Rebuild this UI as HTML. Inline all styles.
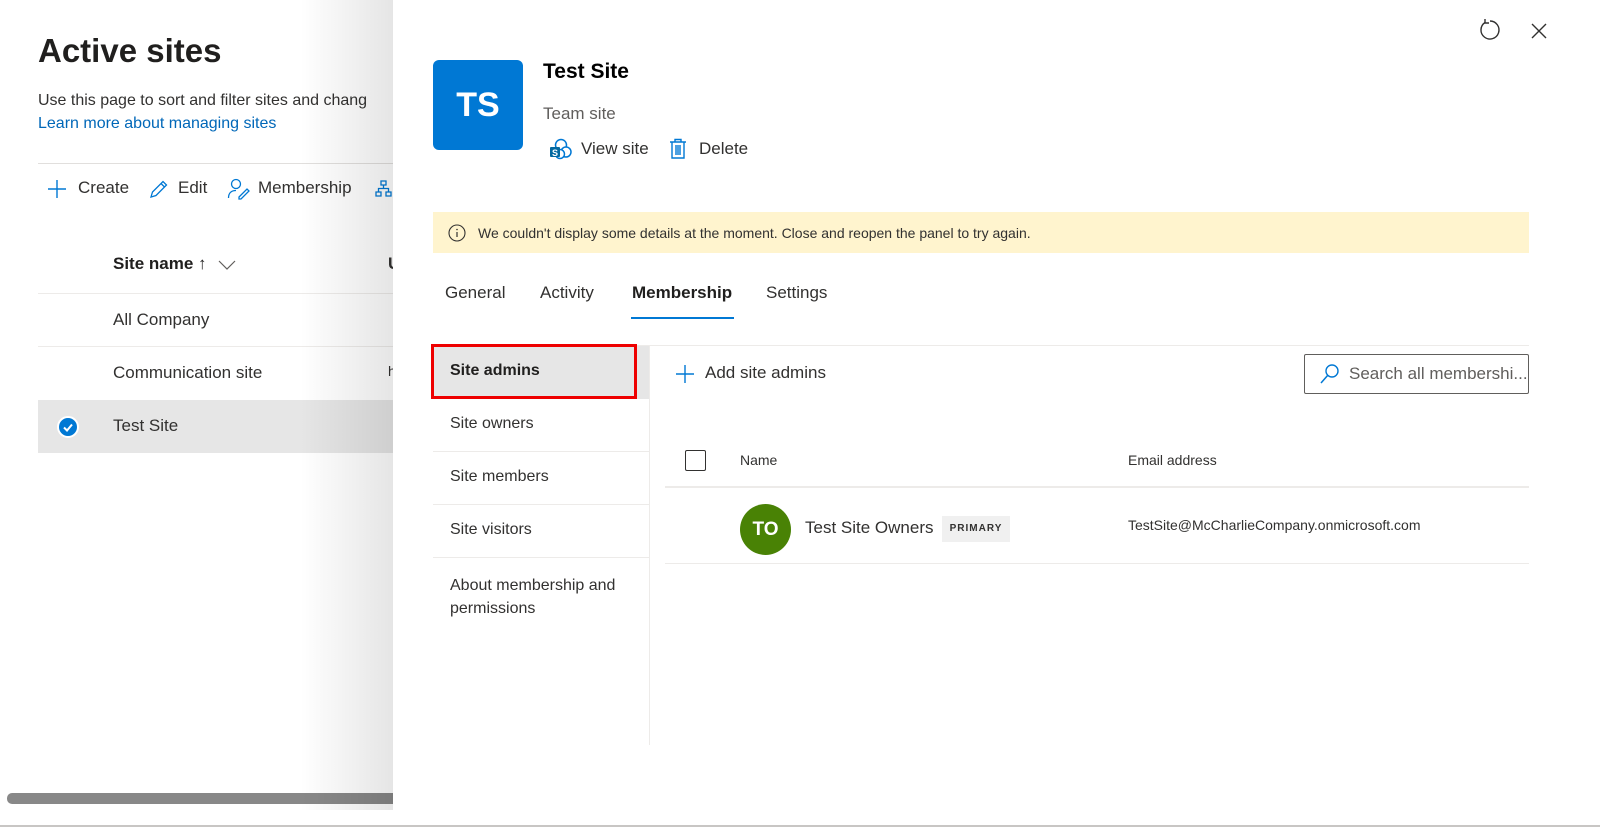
<!DOCTYPE html>
<html><head><meta charset="utf-8"><style>
*{box-sizing:border-box;margin:0;padding:0}
body{width:1600px;height:827px;overflow:hidden;background:#fff;font-family:"Segoe UI","Liberation Sans",sans-serif;color:#323130;position:relative}
.a{position:absolute;white-space:nowrap}
</style></head><body>
<!-- left page -->
<div class="a" style="left:38px;top:32px;font-size:33px;font-weight:700;color:#201f1e">Active sites</div>
<div class="a" style="left:38px;top:92px;font-size:16px">Use this page to sort and filter sites and chang</div>
<div class="a" style="left:38px;top:115px;font-size:16px;color:#0067b8">Learn more about managing sites</div>
<div class="a" style="left:38px;top:163px;width:360px;height:1px;background:#e1dfdd"></div>
<svg class="a" style="left:47px;top:179px" width="20" height="20"><path d="M10 1v18M1 10h18" stroke="#0078d4" stroke-width="1.4"/></svg>
<div class="a" style="left:78px;top:178px;font-size:17px">Create</div>
<svg class="a" style="left:148px;top:178px" width="22" height="22"><path d="M3 19l1.5-5L15 3.5l3.5 3.5L8 17.5z M13 5.5l3.5 3.5" stroke="#0078d4" stroke-width="1.3" fill="none"/></svg>
<div class="a" style="left:178px;top:178px;font-size:17px">Edit</div>
<svg class="a" style="left:227px;top:178px" width="24" height="22"><circle cx="9" cy="6" r="4.5" stroke="#0078d4" stroke-width="1.3" fill="none"/><path d="M1.5 20c0-5 3-7.5 7.5-7.5M12 19l8-8 2 2-8 8h-2z" stroke="#0078d4" stroke-width="1.3" fill="none"/></svg>
<div class="a" style="left:258px;top:178px;font-size:17px">Membership</div>
<svg class="a" style="left:375px;top:180px" width="18" height="18"><path d="M6 1h5v4H6zM1 12h5v4H1zM11 12h5v4h-5zM8.5 5v3.5M3.5 12V8.5h10V12" stroke="#0078d4" stroke-width="1.3" fill="none"/></svg>
<div class="a" style="left:113px;top:254px;font-size:17px;font-weight:600;color:#201f1e">Site name <span style="font-weight:400">↑</span></div>
<svg class="a" style="left:218px;top:259px" width="18" height="12"><path d="M1 2l8 8 8-8" stroke="#605e5c" stroke-width="1.2" fill="none"/></svg>
<div class="a" style="left:388px;top:254px;font-size:17px;font-weight:600">U</div>
<div class="a" style="left:38px;top:293px;width:360px;height:1px;background:#edebe9"></div>
<div class="a" style="left:113px;top:310px;font-size:17px">All Company</div>
<div class="a" style="left:38px;top:346px;width:360px;height:1px;background:#edebe9"></div>
<div class="a" style="left:113px;top:363px;font-size:17px">Communication site</div>
<div class="a" style="left:388px;top:363px;font-size:14px">h</div>
<div class="a" style="left:38px;top:400px;width:360px;height:53px;background:#e6e6e6"></div>
<div class="a" style="left:57px;top:416px;width:22px;height:22px;border-radius:50%;background:#0078d4;border:2px solid #fff"></div>
<svg class="a" style="left:61px;top:420px" width="14" height="14"><path d="M3 7.5l3 3 5-6" stroke="#fff" stroke-width="2" fill="none"/></svg>
<div class="a" style="left:113px;top:416px;font-size:17px">Test Site</div>
<div class="a" style="left:0;top:793px;width:400px;height:12px;background:#fff"></div>
<div class="a" style="left:7px;top:793px;width:400px;height:11px;background:#888;border-radius:5px"></div>
<!-- shadow -->
<div class="a" style="left:300px;top:0;width:93px;height:810px;background:linear-gradient(90deg,rgba(0,0,0,0),rgba(0,0,0,.10))"></div>
<!-- panel -->
<div class="a" style="left:393px;top:0;width:1207px;height:810px;background:#fff"></div>
<div class="a" style="left:0;top:825px;width:1600px;height:2px;background:#c8c6c4"></div>
<svg class="a" style="left:1478px;top:18px" width="24" height="24"><path d="M7 4.5A9 9 0 1 0 12 3" stroke="#323130" stroke-width="1.4" fill="none"/><path d="M7 1v4h4" stroke="#323130" stroke-width="1.4" fill="none"/></svg>
<svg class="a" style="left:1530px;top:22px" width="18" height="18"><path d="M2 2l14 14M16 2L2 16" stroke="#323130" stroke-width="1.4"/></svg>
<div class="a" style="left:433px;top:60px;width:90px;height:90px;background:#0078d4;border-radius:6px;color:#fff;font-size:34px;font-weight:600;text-align:center;line-height:90px">TS</div>
<div class="a" style="left:543px;top:60px;font-size:21px;font-weight:700;color:#000">Test Site</div>
<div class="a" style="left:543px;top:104px;font-size:17px;color:#605e5c">Team site</div>
<svg class="a" style="left:549px;top:138px" width="24" height="22"><circle cx="12" cy="7" r="5.5" stroke="#0078d4" stroke-width="1.5" fill="#fff"/><circle cx="17" cy="14" r="5" stroke="#0078d4" stroke-width="1.5" fill="#fff"/><circle cx="11" cy="16" r="4.5" stroke="#0078d4" stroke-width="1.5" fill="#fff"/><rect x="1" y="9" width="10" height="10" rx="1" fill="#0369a1"/><text x="3" y="18" font-size="9" fill="#fff" font-family="Liberation Sans" font-weight="700">S</text></svg>
<div class="a" style="left:581px;top:139px;font-size:17px">View site</div>
<svg class="a" style="left:668px;top:138px" width="20" height="22"><path d="M2 4h16M7 4V1.5h6V4M4 4v16h12V4M8 7v10M10 7v10M12 7v10" stroke="#0078d4" stroke-width="1.4" fill="none"/></svg>
<div class="a" style="left:699px;top:139px;font-size:17px">Delete</div>
<div class="a" style="left:433px;top:212px;width:1096px;height:41px;background:#fff4ce"></div>
<svg class="a" style="left:448px;top:224px" width="18" height="18"><circle cx="9" cy="9" r="8" stroke="#323130" stroke-width="1.1" fill="none"/><path d="M9 8v5" stroke="#323130" stroke-width="1.2"/><circle cx="9" cy="5.5" r=".8" fill="#323130"/></svg>
<div class="a" style="left:478px;top:225px;font-size:14px">We couldn't display some details at the moment. Close and reopen the panel to try again.</div>
<div class="a" style="left:445px;top:283px;font-size:17px">General</div>
<div class="a" style="left:540px;top:283px;font-size:17px">Activity</div>
<div class="a" style="left:632px;top:283px;font-size:17px;font-weight:600;color:#201f1e">Membership</div>
<div class="a" style="left:631px;top:317px;width:103px;height:2px;background:#0078d4"></div>
<div class="a" style="left:766px;top:283px;font-size:17px">Settings</div>
<div class="a" style="left:433px;top:345px;width:1096px;height:1px;background:#edebe9"></div>
<div class="a" style="left:649px;top:345px;width:1px;height:400px;background:#edebe9"></div>
<div class="a" style="left:433px;top:346px;width:216px;height:53px;background:#e6e6e6"></div>
<div class="a" style="left:431px;top:344px;width:206px;height:55px;border:3px solid #e00"></div>
<div class="a" style="left:450px;top:362px;font-size:16px;font-weight:600;color:#201f1e">Site admins</div>
<div class="a" style="left:450px;top:415px;font-size:16px">Site owners</div>
<div class="a" style="left:433px;top:451px;width:216px;height:1px;background:#edebe9"></div>
<div class="a" style="left:450px;top:468px;font-size:16px">Site members</div>
<div class="a" style="left:433px;top:504px;width:216px;height:1px;background:#edebe9"></div>
<div class="a" style="left:450px;top:521px;font-size:16px">Site visitors</div>
<div class="a" style="left:433px;top:557px;width:216px;height:1px;background:#edebe9"></div>
<div class="a" style="left:450px;top:574px;font-size:16px;line-height:23px">About membership and<br>permissions</div>
<svg class="a" style="left:675px;top:364px" width="20" height="20"><path d="M10 1v18M1 10h18" stroke="#0078d4" stroke-width="1.4"/></svg>
<div class="a" style="left:705px;top:363px;font-size:17px">Add site admins</div>
<div class="a" style="left:1304px;top:354px;width:225px;height:40px;border:1px solid #605e5c;border-radius:2px"></div>
<svg class="a" style="left:1319px;top:363px" width="22" height="22"><circle cx="13" cy="8" r="6" stroke="#0078d4" stroke-width="1.4" fill="none"/><path d="M9 12L2 20" stroke="#0078d4" stroke-width="1.5"/></svg>
<div class="a" style="left:1349px;top:364px;font-size:17px;color:#605e5c">Search all membershi...</div>
<div class="a" style="left:685px;top:450px;width:21px;height:21px;border:1px solid #323130;border-radius:2px"></div>
<div class="a" style="left:740px;top:452px;font-size:14px">Name</div>
<div class="a" style="left:1128px;top:452px;font-size:14px">Email address</div>
<div class="a" style="left:665px;top:486px;width:864px;height:2px;background:#edebe9"></div>
<div class="a" style="left:740px;top:504px;width:51px;height:51px;border-radius:50%;background:#498205;color:#fff;font-size:19px;font-weight:600;text-align:center;line-height:51px">TO</div>
<div class="a" style="left:805px;top:518px;font-size:17px">Test Site Owners</div>
<div class="a" style="left:942px;top:516px;width:68px;height:26px;background:#f0f0f0;font-size:10px;font-weight:700;letter-spacing:1px;text-align:center;line-height:26px">PRIMARY</div>
<div class="a" style="left:1128px;top:517px;font-size:14px">TestSite@McCharlieCompany.onmicrosoft.com</div>
<div class="a" style="left:665px;top:563px;width:864px;height:1px;background:#edebe9"></div>
</body></html>
